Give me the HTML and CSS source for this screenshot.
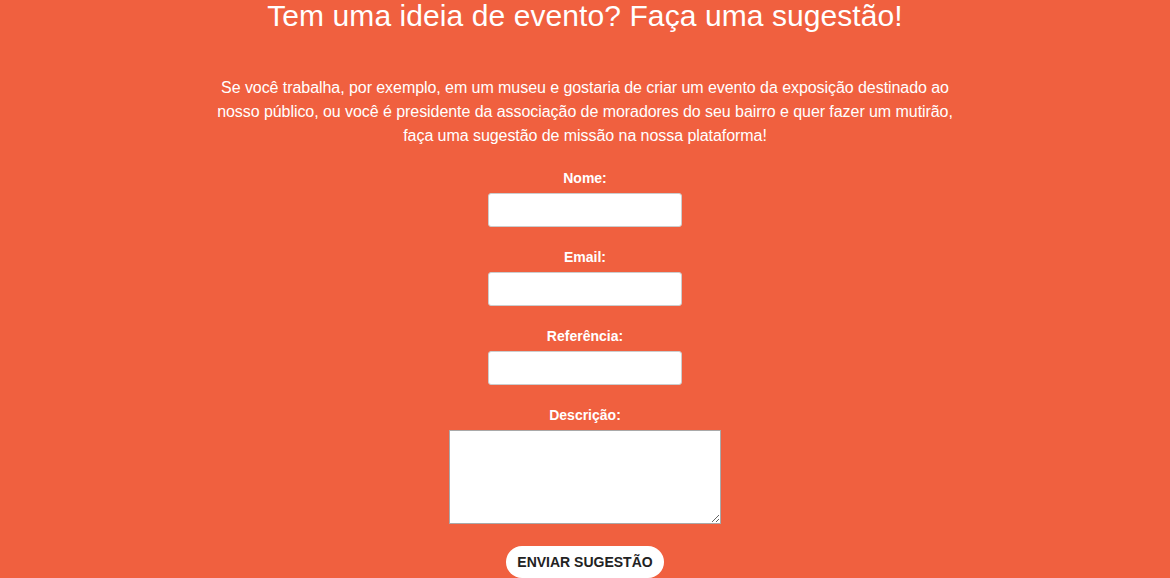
FILE: index.html
```html
<!DOCTYPE html>
<html lang="pt-BR">
<head>
<meta charset="utf-8">
<title>Sugestão de evento</title>
<link rel="stylesheet" href="styles.css">
</head>
<body>
<section class="suggest">
  <h1 class="title">Tem uma ideia de evento? Faça uma sugestão!</h1>
  <p class="intro">Se você trabalha, por exemplo, em um museu e gostaria de criar um evento da exposição destinado ao nosso público, ou você é presidente da associação de moradores do seu bairro e quer fazer um mutirão, faça uma sugestão de missão na nossa plataforma!</p>
  <form class="form">
    <div class="field">
      <label class="label" for="nome">Nome:</label>
      <input class="input" id="nome" type="text">
    </div>
    <div class="field">
      <label class="label" for="email">Email:</label>
      <input class="input" id="email" type="email">
    </div>
    <div class="field">
      <label class="label" for="ref">Referência:</label>
      <input class="input" id="ref" type="text">
    </div>
    <div class="field">
      <label class="label" for="desc">Descrição:</label>
      <textarea class="textarea" id="desc"></textarea>
    </div>
    <button class="button" type="button">ENVIAR SUGESTÃO</button>
  </form>
</section>
</body>
</html>
```

FILE: styles.css
```css
html, body {
  margin: 0;
  padding: 0;
  background: #f0603f;
  height: 100%;
  overflow: hidden;
}
body {
  font-family: "Liberation Sans", Arial, sans-serif;
  color: #ffffff;
}
.suggest {
  display: flex;
  flex-direction: column;
  align-items: center;
}
.title {
  margin: 0;
  font-size: 30px;
  line-height: 32px;
  letter-spacing: 0.08px;
  font-weight: 400;
  text-align: center;
}
.intro {
  margin: 44px 0 0;
  width: 750px;
  font-size: 16px;
  line-height: 24px;
  letter-spacing: -0.06px;
  text-align: center;
}
.form {
  margin-top: 22px;
  display: flex;
  flex-direction: column;
  align-items: center;
  gap: 22px;
}
.field {
  display: flex;
  flex-direction: column;
  align-items: center;
  gap: 7px;
}
.label {
  font-size: 14px;
  line-height: 16px;
  font-weight: 700;
}
.input {
  box-sizing: border-box;
  width: 194px;
  height: 34px;
  border: 1px solid #cccccc;
  border-radius: 3px;
  background: #ffffff;
  margin: 0;
}
.textarea {
  box-sizing: border-box;
  width: 272px;
  height: 94px;
  border: 1px solid #a9a9a9;
  background: #ffffff;
  margin: 0;
  resize: both;
}
.button {
  height: 32px;
  padding: 0 11px;
  border: 0;
  border-radius: 16px;
  background: #ffffff;
  color: #222222;
  font-family: "Liberation Sans", Arial, sans-serif;
  font-size: 14px;
  font-weight: 700;
}
```
